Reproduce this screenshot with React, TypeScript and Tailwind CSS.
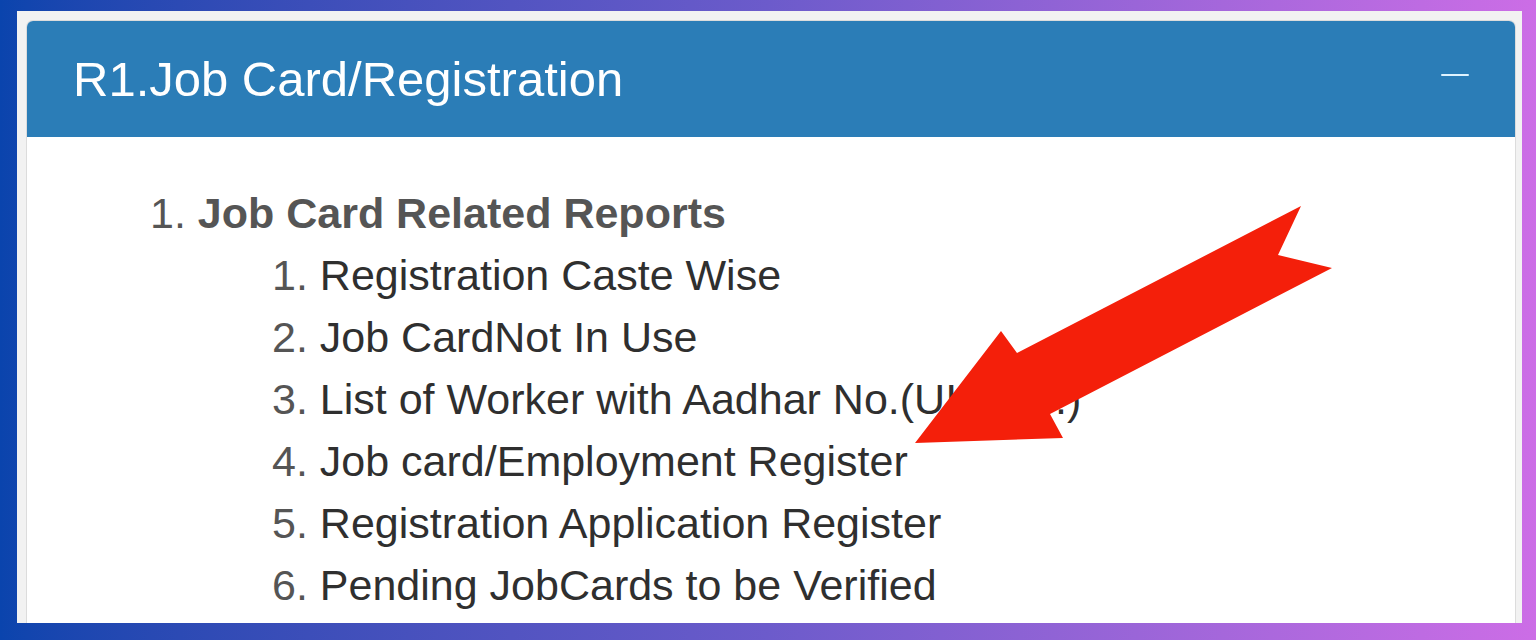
const reports = [
  "Registration Caste Wise",
  "Job CardNot In Use",
  "List of Worker with Aadhar No.(UID No.)",
  "Job card/Employment Register",
  "Registration Application Register",
  "Pending JobCards to be Verified",
];

export default function App() {
  return (
    <div
      className="relative w-[1536px] h-[640px] overflow-hidden bg-gradient-to-r from-[#0a44ad] via-[#6c5bcb] to-[#cc6de6] pt-[11px] pl-[17px] pr-[14px] pb-[17px]"
      style={{ fontFamily: '"Liberation Sans", Arial, sans-serif' }}
    >
      {/* outer light frame */}
      <div className="h-full bg-[#f2f2f2] pt-[9px] pl-[9px] pr-[6px] flex flex-col">
        {/* panel */}
        <div className="flex-1 flex flex-col bg-white border border-b-0 border-[#dcdcdc] rounded-t-[7px] overflow-hidden">
          <div className="h-[116px] shrink-0 bg-[#2b7db7] flex items-center justify-between pl-[46px] pr-[46px]">
            <h2 className="text-[49px] leading-none text-white font-normal">R1.Job Card/Registration</h2>
            <span className="block w-[28px] h-[2px] mb-[8px] bg-[#dff3ff] rounded-full" />
          </div>

          <div className="pt-[45px] pl-[123px]">
            <div className="text-[43px] leading-[62px] text-[#555]">
              1. <span className="font-bold">Job Card Related Reports</span>
            </div>
            <div className="pl-[122px]">
              {reports.map((r, i) => (
                <div key={r} className="text-[43px] leading-[62px] whitespace-nowrap">
                  <span className="text-[#555]">{i + 1}. </span>
                  <span className="text-[#2f2f2f]">{r}</span>
                </div>
              ))}
            </div>
          </div>
        </div>
      </div>

      {/* red arrow overlay */}
      <svg
        className="absolute inset-0 pointer-events-none"
        width="1536"
        height="640"
        viewBox="0 0 1536 640"
      >
        <polygon
          points="915,443 1001,331 1017,353 1301,206 1278,255 1332,268 1050,414 1063,438"
          fill="#f41f0a"
        />
      </svg>
    </div>
  );
}
